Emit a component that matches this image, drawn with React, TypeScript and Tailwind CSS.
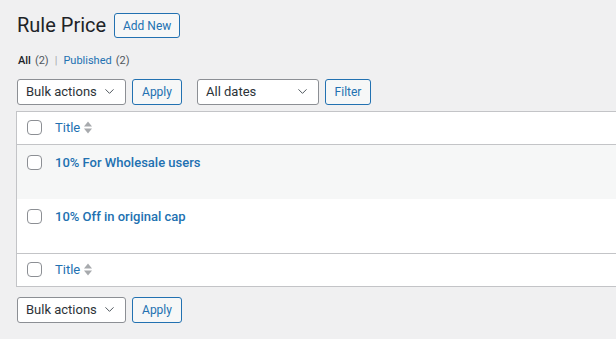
import { ChevronDown } from "lucide-react";

const font = { fontFamily: 'Roboto, "Liberation Sans", sans-serif' };

function Select({ label, width }: { label: string; width: string }) {
  return (
    <div
      className={`${width} h-[26px] flex items-center justify-between pl-2 pr-2 bg-white border border-[#8c8f94] rounded-[3px] text-[13px] text-[#2c3338]`}
    >
      <span>{label}</span>
      <ChevronDown size={15} strokeWidth={1.6} className="text-[#50575e]" />
    </div>
  );
}

function Btn({ label, width }: { label: string; width: string }) {
  return (
    <div
      className={`${width} h-[26px] flex items-center justify-center bg-[#f6f7f7] border border-[#2271b1] rounded-[3px] text-[12px] text-[#2271b1]`}
    >
      {label}
    </div>
  );
}

function Check() {
  return <div className="w-[15px] h-[15px] bg-white border border-[#8c8f94] rounded-[4px] shrink-0" />;
}

function SortArrows() {
  return (
    <svg width="8" height="13" viewBox="0 0 8 13" className="ml-1">
      <path d="M0 5.5 L4 0.5 L8 5.5 Z" fill="#a7aaad" />
      <path d="M0 7.5 L4 12.5 L8 7.5 Z" fill="#a7aaad" />
    </svg>
  );
}

function TitleRow({ top }: { top: boolean }) {
  return (
    <div
      className={`h-[33px] flex items-center pl-[10px] ${top ? "border-b" : "border-t"} border-[#c3c4c7]`}
    >
      <Check />
      <span className="ml-[13px] text-[13px] text-[#2271b1]">Title</span>
      <SortArrows />
    </div>
  );
}

function Row({ label, shaded }: { label: string; shaded: boolean }) {
  return (
    <div className={`h-[54px] flex items-start pl-[10px] pt-[10px] ${shaded ? "bg-[#f6f7f7]" : "bg-white"}`}>
      <Check />
      <span className="ml-[13px] -mt-[2px] text-[13px] font-medium text-[#2271b1]">{label}</span>
    </div>
  );
}

export default function App() {
  return (
    <div className="w-[616px] h-[339px] bg-[#f0f0f1] overflow-hidden pl-[16px]" style={font}>
      <div className="flex items-center pt-[13px] pl-[1px]">
        <h1 className="text-[20px] text-[#1d2327] leading-[25px]">Rule Price</h1>
        <div className="ml-[8px] w-[66px] h-[25px] flex items-center justify-center bg-[#f6f7f7] border border-[#2271b1] rounded-[3px] text-[12px] text-[#2271b1]">
          Add New
        </div>
      </div>
      <div className="flex items-center mt-[15px] pl-[2px] text-[11px] text-[#50575e]">
        <span className="text-[#1d2327] font-medium">All</span>
        <span className="ml-1">(2)</span>
        <span className="mx-[6px] text-[#a7aaad]">|</span>
        <span className="text-[#2271b1]">Published</span>
        <span className="ml-1">(2)</span>
      </div>
      <div className="flex items-center mt-[9px] pl-[1px]">
        <Select label="Bulk actions" width="w-[109px]" />
        <div className="ml-[6px]">
          <Btn label="Apply" width="w-[50px]" />
        </div>
        <div className="ml-[15px]">
          <Select label="All dates" width="w-[122px]" />
        </div>
        <div className="ml-[6px]">
          <Btn label="Filter" width="w-[46px]" />
        </div>
      </div>
      <div className="mt-[6px] w-[620px] bg-white border border-[#c3c4c7]">
        <TitleRow top />
        <Row label="10% For Wholesale users" shaded />
        <Row label="10% Off in original cap" shaded={false} />
        <TitleRow top={false} />
      </div>
      <div className="flex items-center mt-[10px] pl-[1px]">
        <Select label="Bulk actions" width="w-[109px]" />
        <div className="ml-[6px]">
          <Btn label="Apply" width="w-[50px]" />
        </div>
      </div>
    </div>
  );
}
